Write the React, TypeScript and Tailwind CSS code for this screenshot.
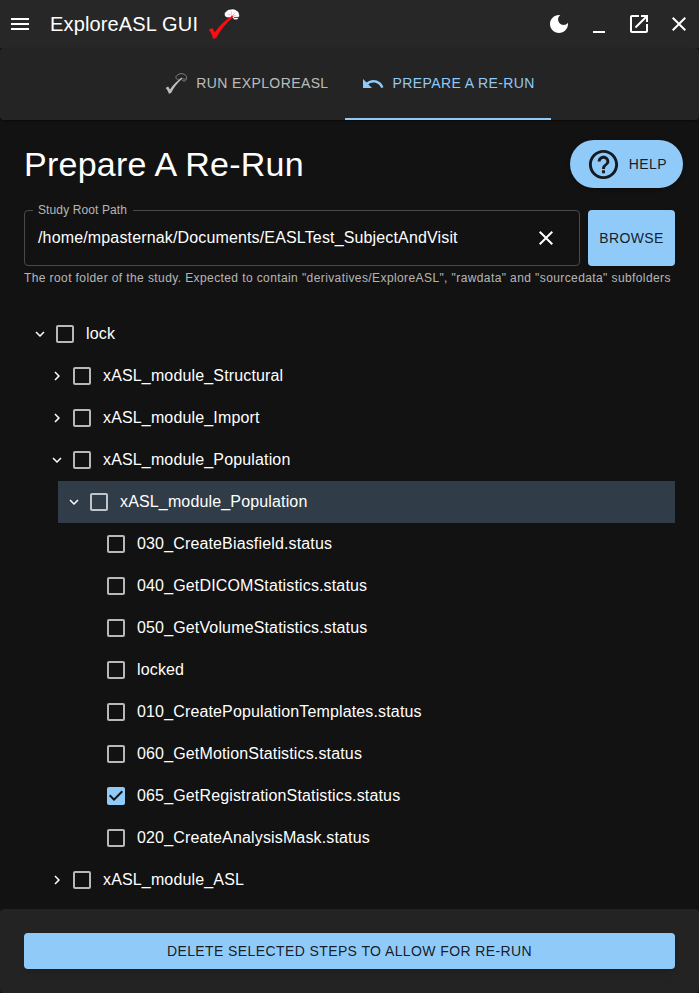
import type { ReactNode } from "react";

const PATHS = {
  menu: "M3 18h18v-2H3v2zm0-5h18v-2H3v2zm0-7v2h18V6H3z",
  moon: "M12 3c-4.97 0-9 4.03-9 9s4.03 9 9 9 9-4.03 9-9c0-.46-.04-.92-.1-1.36-.98 1.37-2.58 2.26-4.4 2.26-2.98 0-5.4-2.42-5.4-5.4 0-1.81.89-3.42 2.26-4.4-.44-.06-.9-.1-1.36-.1z",
  minimize: "M6 19h12v2H6z",
  open: "M19 19H5V5h7V3H5c-1.11 0-2 .9-2 2v14c0 1.1.89 2 2 2h14c1.1 0 2-.9 2-2v-7h-2v7zM14 3v2h3.59l-9.83 9.83 1.41 1.41L19 6.41V10h2V3h-7z",
  close: "M19 6.41L17.59 5 12 10.59 6.41 5 5 6.41 10.59 12 5 17.59 6.41 19 12 13.41 17.59 19 19 17.59 13.41 12z",
  help: "M11 18h2v-2h-2v2zm1-16C6.48 2 2 6.48 2 12s4.48 10 10 10 10-4.48 10-10S17.52 2 12 2zm0 18c-4.41 0-8-3.59-8-8s3.59-8 8-8 8 3.59 8 8-3.59 8-8 8zm0-14c-2.21 0-4 1.79-4 4h2c0-1.1.9-2 2-2s2 .9 2 2c0 2-3 1.75-3 5h2c0-2.25 3-2.5 3-5 0-2.21-1.79-4-4-4z",
  undo: "M12.5 8c-2.65 0-5.05.99-6.9 2.6L2 7v9h9l-3.62-3.62c1.39-1.16 3.16-1.88 5.12-1.88 3.54 0 6.55 2.31 7.6 5.5l2.37-.78C21.08 11.03 17.15 8 12.5 8z",
  box: "M19 5v14H5V5h14m0-2H5c-1.1 0-2 .9-2 2v14c0 1.1.9 2 2 2h14c1.1 0 2-.9 2-2V5c0-1.1-.9-2-2-2z",
  checked: "M19 3H5c-1.11 0-2 .9-2 2v14c0 1.1.89 2 2 2h14c1.11 0 2-.9 2-2V5c0-1.1-.89-2-2-2zm-9 14l-5-5 1.41-1.41L10 14.17l7.59-7.59L19 8l-9 9z",
  expand: "M16.59 8.59L12 13.17 7.41 8.59 6 10l6 6 6-6z",
  right: "M10 6L8.59 7.41 13.17 12l-4.58 4.59L10 18l6-6z",
};

function Icon({ name, className = "size-6" }: { name: keyof typeof PATHS; className?: string }) {
  return (
    <svg viewBox="0 0 24 24" fill="currentColor" className={`shrink-0 ${className}`}>
      <path d={PATHS[name]} />
    </svg>
  );
}

function Logo() {
  return (
    <svg viewBox="0 0 34 34" className="size-[34px] shrink-0">
      <path
        d="M17.600 8.500c-.9-2 .3-3.600 1.700-4.200 1-1.600 3-2.300 4.700-2.100 2-.6 4.500-.1 5.500 1.300 1.800.5 2.800 2.200 2.700 3.800.7 1.200.4 2.600-.6 3.100-.2 1.500-1.500 2.600-3 2.400-1 .3-2-.2-2.300-1.200l-1.500-.8c-1.200.6-2.500.3-3.200-.3-1.600.5-3.400-.3-4-2z"
        fill="#fff"
        stroke="#111"
        strokeWidth=".6"
      />
      <path d="M27 10.600l4.800-.3" stroke="#222" strokeWidth=".8" fill="none" />
      <path d="M25 8.500l-1-4.500M25.500 8.500l3-3M25 8.500l-4.500-1.500M25.500 8.500l4 .3" stroke="#ee9a9a" strokeWidth=".6" fill="none" />
      <path d="M1.600 22.800l3.700-1.900 2.500 4.300C12.500 18.500 18.500 13 25.300 8.400l1.200 1.300C19.500 16 13.500 22.500 9.400 30.700l-3.200 1.300c-.8-3.400-2.200-6.500-4.600-9.200z" fill="#fb0d14" />
    </svg>
  );
}

function RunIcon() {
  return (
    <svg viewBox="0 0 24 24" className="size-6 shrink-0">
      <path
        d="M12.300 6.600c-.9-1.600-.1-3.100 1.300-3.500C14.800 1.500 18.800 1 20.100 2.500c1.700.3 2.700 1.700 2.400 3.300.3.9-.1 1.700-.7 2-.3 1.300-1.900 1.700-2.800.8l-1.300-.9"
        stroke="#8b8b8b"
        strokeWidth=".9"
        fill="none"
      />
      <path d="M12.300 6.600c.8.900 2.200 1 3.200.5M18.500 6.500l3.600.9" stroke="#8b8b8b" strokeWidth=".7" fill="none" />
      <path d="M1.600 16l2.500-1.400 1.900 2.800C9.200 12.900 13 9.100 17.600 5.600l.9 1C13.500 11 9.800 15.600 7.100 20.900l-2.200.9c-.6-2.200-1.600-4.200-3.300-5.800z" fill="#bdbdbd" />
    </svg>
  );
}

type Row = { indent: string; label: string; state?: "open" | "closed"; checked?: boolean; selected?: boolean };

const rows: Row[] = [
  { indent: "ml-0", label: "lock", state: "open" },
  { indent: "ml-[17px]", label: "xASL_module_Structural", state: "closed" },
  { indent: "ml-[17px]", label: "xASL_module_Import", state: "closed" },
  { indent: "ml-[17px]", label: "xASL_module_Population", state: "open" },
  { indent: "ml-[34px]", label: "xASL_module_Population", state: "open", selected: true },
  { indent: "ml-[51px]", label: "030_CreateBiasfield.status" },
  { indent: "ml-[51px]", label: "040_GetDICOMStatistics.status" },
  { indent: "ml-[51px]", label: "050_GetVolumeStatistics.status" },
  { indent: "ml-[51px]", label: "locked" },
  { indent: "ml-[51px]", label: "010_CreatePopulationTemplates.status" },
  { indent: "ml-[51px]", label: "060_GetMotionStatistics.status" },
  { indent: "ml-[51px]", label: "065_GetRegistrationStatistics.status", checked: true },
  { indent: "ml-[51px]", label: "020_CreateAnalysisMask.status" },
  { indent: "ml-[17px]", label: "xASL_module_ASL", state: "closed" },
];

function TreeRow({ row }: { row: Row }) {
  return (
    <li className={`flex h-[42px] items-center pl-[7px] ${row.indent} ${row.selected ? "bg-[#303d48]" : ""}`}>
      <span className="mr-1 flex size-[18px] shrink-0">
        {row.state && <Icon name={row.state === "open" ? "expand" : "right"} className="size-[18px]" />}
      </span>
      <Icon name={row.checked ? "checked" : "box"} className={`size-6 ${row.checked ? "text-[#90caf9]" : "text-white/70"}`} />
      <span className="ml-[9px] text-base leading-6 tracking-[0.15px]">{row.label}</span>
    </li>
  );
}

function Tab({ active, icon, children }: { active?: boolean; icon: ReactNode; children: ReactNode }) {
  return (
    <button
      className={`flex h-[72px] items-center gap-2 border-b-2 px-4 pt-0.5 text-sm tracking-[0.4px] ${
        active ? "border-[#90caf9] text-[#90caf9]" : "border-transparent text-white/70"
      }`}
    >
      {icon}
      <span className="pb-0.5">{children}</span>
    </button>
  );
}

export default function App() {
  return (
    <div className="flex h-[993px] w-[699px] flex-col bg-[#121212] font-['Liberation_Sans',Arial,sans-serif] text-white">
      <header className="flex h-12 shrink-0 items-center bg-[#272727] px-2">
        <Icon name="menu" />
        <h1 className="ml-[18px] text-xl leading-8 tracking-[0.15px]">ExploreASL GUI</h1>
        <div className="ml-[9px]">
          <Logo />
        </div>
        <div className="ml-auto flex gap-4">
          <Icon name="moon" />
          <Icon name="minimize" />
          <Icon name="open" />
          <Icon name="close" />
        </div>
      </header>

      <nav className="flex h-[72px] shrink-0 justify-center rounded bg-[#242424] shadow-[0_2px_1px_-1px_rgba(0,0,0,.2),0_1px_1px_rgba(0,0,0,.14),0_1px_3px_rgba(0,0,0,.12)]">
        <Tab icon={<RunIcon />}>RUN EXPLOREASL</Tab>
        <Tab active icon={<Icon name="undo" />}>PREPARE A RE-RUN</Tab>
      </nav>

      <main className="flex grow flex-col px-6 pt-5">
        <div className="-mr-2 flex h-12 items-center justify-between">
          <h2 className="text-[34px] leading-[42px] tracking-[0.25px]">Prepare A Re-Run</h2>
          <button className="flex h-12 items-center gap-2 rounded-full bg-[#90caf9] px-4 text-sm tracking-[0.4px] text-black/87 shadow-[0_3px_1px_-2px_rgba(0,0,0,.2),0_2px_2px_rgba(0,0,0,.14),0_1px_5px_rgba(0,0,0,.12)]">
            <Icon name="help" className="size-[35px]" />
            <span>HELP</span>
          </button>
        </div>

        <div className="mt-[22px] flex h-14 gap-2">
          <div className="relative flex w-[556px] items-center justify-between rounded border border-[#4a4a4a] pr-[21px] pl-[13px]">
            <span className="absolute -top-[9px] left-2 bg-[#121212] pr-1.5 pl-[5px] text-xs leading-4 tracking-[0.11px] text-white/70">Study Root Path</span>
            <span className="text-base tracking-[0.15px]">/home/mpasternak/Documents/EASLTest_SubjectAndVisit</span>
            <Icon name="close" />
          </div>
          <button className="w-[87px] rounded bg-[#90caf9] text-sm tracking-[0.4px] text-black/87 shadow-md">BROWSE</button>
        </div>
        <p className="mt-0.5 text-xs leading-5 tracking-[0.4px] whitespace-nowrap text-white/70">
          The root folder of the study. Expected to contain "derivatives/ExploreASL", "rawdata" and "sourcedata" subfolders
        </p>

        <ul className="mt-[25px] flex flex-col">
          {rows.map((row, i) => (
            <TreeRow key={i} row={row} />
          ))}
        </ul>
      </main>

      <footer className="h-[84px] shrink-0 rounded bg-[#232323] px-6 pt-6">
        <button className="h-9 w-full rounded bg-[#90caf9] text-sm tracking-[0.4px] text-black/87 shadow-md">
          DELETE SELECTED STEPS TO ALLOW FOR RE-RUN
        </button>
      </footer>
    </div>
  );
}
